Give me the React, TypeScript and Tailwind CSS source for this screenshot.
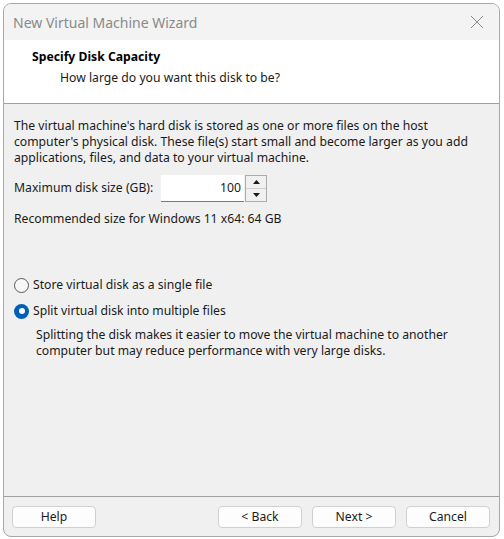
import React from "react";

const font = { fontFamily: '"Noto Sans", "Open Sans", sans-serif' };

function Radio({ checked }: { checked: boolean }) {
  return checked ? (
    <div className="w-[15px] h-[15px] rounded-full bg-[#005fb8] flex items-center justify-center shrink-0">
      <div className="w-[6px] h-[6px] rounded-full bg-white" />
    </div>
  ) : (
    <div className="w-[15px] h-[15px] rounded-full border border-[#5a5a5a] bg-[#f7f7f7] shrink-0" />
  );
}

function Btn({ label }: { label: string }) {
  return (
    <div className="w-[84px] h-[22px] rounded-[4px] border border-[#d0d0d0] bg-[#fdfdfd] flex items-center justify-center text-[12.2px] text-[#1a1a1a]">
      {label}
    </div>
  );
}

export default function App() {
  return (
    <div className="w-[504px] h-[539px] bg-white pt-[3px] pl-[3px]" style={font}>
      <div className="w-[497px] h-[534px] rounded-[8px] border border-[#a8a8a8] overflow-hidden flex flex-col bg-[#f0f0f0]">
        {/* title bar */}
        <div className="h-[36px] bg-[#f3f3f3] flex items-center justify-between pl-[9px] pr-[14px] shrink-0">
          <span className="text-[14px] text-[#8a8a8a]">New Virtual Machine Wizard</span>
          <svg width="14" height="14" viewBox="0 0 14 14" className="mr-[1px]">
            <path d="M1 1L13 13M13 1L1 13" stroke="#8a8a8a" strokeWidth="1" />
          </svg>
        </div>
        {/* header */}
        <div className="h-[64px] bg-white border-b border-[#a0a0a0] shrink-0 pt-[8px] pl-[28px]">
          <div className="text-[12.2px] font-bold text-black leading-[18px]">Specify Disk Capacity</div>
          <div className="text-[12.2px] text-[#1a1a1a] leading-[18px] pl-[28px] mt-[3px]">How large do you want this disk to be?</div>
        </div>
        {/* body */}
        <div className="flex-1 pl-[10px] pt-[14px] text-[12.2px] text-[#1a1a1a] border-b border-[#a0a0a0]">
          <div className="leading-[16px]">
            The virtual machine's hard disk is stored as one or more files on the host
            <br />
            computer's physical disk. These file(s) start small and become larger as you add
            <br />
            applications, files, and data to your virtual machine.
          </div>
          <div className="flex items-center mt-[9px] h-[27px]">
            <span className="w-[147px]">Maximum disk size (GB):</span>
            <div className="w-[83px] h-[27px] bg-white border-b border-[#7a7a7a] flex items-center justify-end pr-[3px]">
              100
            </div>
            <div className="ml-[1px] w-[22px] h-[27px] border border-[#adadad] bg-[#f0f0f0] flex flex-col">
              <div className="flex-1 flex items-center justify-center border-b border-[#d0d0d0]">
                <svg width="7" height="4" viewBox="0 0 7 4"><path d="M3.5 0L7 4H0Z" fill="#1a1a1a" /></svg>
              </div>
              <div className="flex-1 flex items-center justify-center">
                <svg width="7" height="4" viewBox="0 0 7 4"><path d="M0 0H7L3.5 4Z" fill="#1a1a1a" /></svg>
              </div>
            </div>
          </div>
          <div className="mt-[9px] leading-[16px]">Recommended size for Windows 11 x64: 64 GB</div>
          <div className="mt-[50px] flex items-center gap-[4px] h-[16px]">
            <Radio checked={false} />
            <span>Store virtual disk as a single file</span>
          </div>
          <div className="mt-[10px] flex items-center gap-[4px] h-[16px]">
            <Radio checked={true} />
            <span>Split virtual disk into multiple files</span>
          </div>
          <div className="mt-[8px] pl-[22px] leading-[16px]">
            Splitting the disk makes it easier to move the virtual machine to another
            <br />
            computer but may reduce performance with very large disks.
          </div>
        </div>
        {/* footer */}
        <div className="h-[39px] shrink-0 flex items-center pl-[8px] pr-[9px] pt-[1px]">
          <Btn label="Help" />
          <div className="flex-1" />
          <div className="flex gap-[10px]">
            <Btn label="< Back" />
            <Btn label="Next >" />
            <Btn label="Cancel" />
          </div>
        </div>
      </div>
    </div>
  );
}
